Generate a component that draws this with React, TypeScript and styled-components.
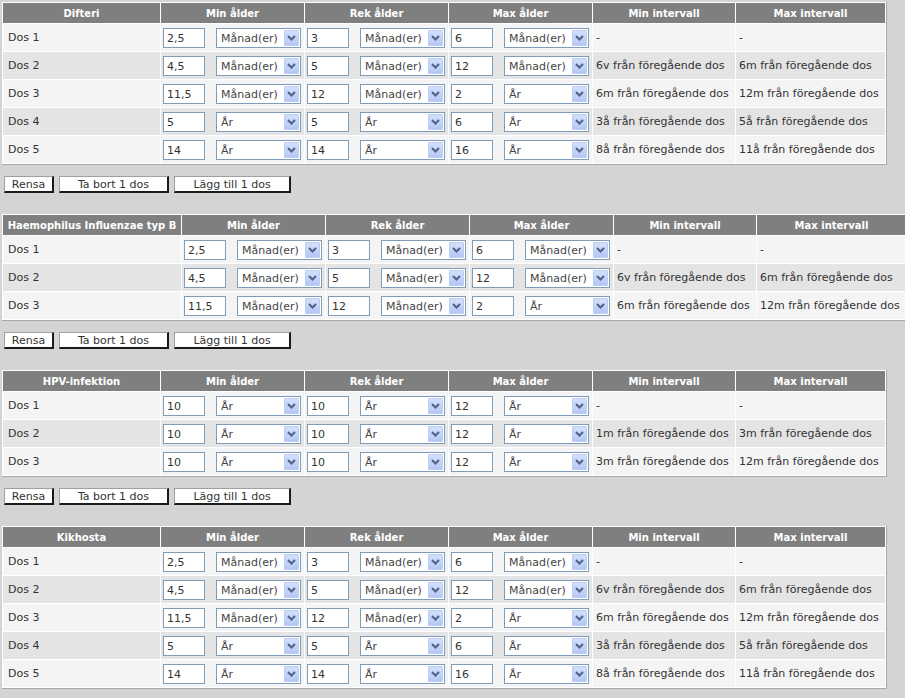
import styled, { createGlobalStyle } from 'styled-components';

type Dose = [string, string, string, string, string, string, string, string];

interface Vaccine {
	name: string;
	labelWidth: number;
	doses: Dose[];
}

const M = 'Månad(er)';
const Y = 'År';
const FROM = ' från föregående dos';

const childDoses: Dose[] = [
	['2,5', M, '3', M, '6', M, '-', '-'],
	['4,5', M, '5', M, '12', M, '6v' + FROM, '6m' + FROM],
	['11,5', M, '12', M, '2', Y, '6m' + FROM, '12m' + FROM],
	['5', Y, '5', Y, '6', Y, '3å' + FROM, '5å' + FROM],
	['14', Y, '14', Y, '16', Y, '8å' + FROM, '11å' + FROM],
];

const vaccines: Vaccine[] = [
	{ name: 'Difteri', labelWidth: 157, doses: childDoses },
	{ name: 'Haemophilus Influenzae typ B', labelWidth: 178, doses: childDoses.slice(0, 3) },
	{
		name: 'HPV-infektion',
		labelWidth: 157,
		doses: [
			['10', Y, '10', Y, '12', Y, '-', '-'],
			['10', Y, '10', Y, '12', Y, '1m' + FROM, '3m' + FROM],
			['10', Y, '10', Y, '12', Y, '3m' + FROM, '12m' + FROM],
		],
	},
	{ name: 'Kikhosta', labelWidth: 157, doses: childDoses },
];

const columns = [
	{ title: 'Min ålder', width: 143 },
	{ title: 'Rek ålder', width: 143 },
	{ title: 'Max ålder', width: 143 },
	{ title: 'Min intervall', width: 142 },
	{ title: 'Max intervall', width: 149 },
];

const GlobalStyle = createGlobalStyle`
	html, body {
		margin: 0;
		background: #d4d4d4;
		overflow: hidden;
	}
	body {
		font-family: 'DejaVu Sans', Verdana, sans-serif;
		font-size: 11px;
		color: #333;
	}
`;

function AgeSelect({ value }: { value: string }) {
	return (
		<SelectBox>
			<SelectText>{value}</SelectText>
			<ArrowButton>
				<svg width='9' height='6' viewBox='0 0 9 6'>
					<polyline points='1,1 4.5,4.5 8,1' fill='none' stroke='#4d6185' strokeWidth='2' />
				</svg>
			</ArrowButton>
		</SelectBox>
	);
}

function AgeCell({ value, unit }: { value: string; unit: string }) {
	return (
		<Cell>
			<AgeField>
				<NumberInput defaultValue={value} />
				<AgeSelect value={unit} />
			</AgeField>
		</Cell>
	);
}

function VaccineTable({ vaccine }: { vaccine: Vaccine }) {
	const tableWidth = 1 + vaccine.labelWidth + 1 + columns.reduce((s, c) => s + c.width + 1, 0) + 1;
	return (
		<Block>
			<Table style={{ width: tableWidth }}>
				<thead>
					<tr>
						<HeaderCell $width={vaccine.labelWidth}>{vaccine.name}</HeaderCell>
						{columns.map(c => (
							<HeaderCell key={c.title} $width={c.width}>
								{c.title}
							</HeaderCell>
						))}
					</tr>
				</thead>
				<tbody>
					{vaccine.doses.map((d, i) => (
						<Row key={i} $even={i % 2 === 1}>
							<TextCell>Dos {i + 1}</TextCell>
							<AgeCell value={d[0]} unit={d[1]} />
							<AgeCell value={d[2]} unit={d[3]} />
							<AgeCell value={d[4]} unit={d[5]} />
							<TextCell $small>{d[6]}</TextCell>
							<TextCell $small>{d[7]}</TextCell>
						</Row>
					))}
				</tbody>
			</Table>
			<ButtonBar>
				<ActionButton $width={50}>Rensa</ActionButton>
				<ActionButton $width={110}>Ta bort 1 dos</ActionButton>
				<ActionButton $width={117}>Lägg till 1 dos</ActionButton>
			</ButtonBar>
		</Block>
	);
}

export default function App() {
	return (
		<Page>
			<GlobalStyle />
			{vaccines.map(v => (
				<VaccineTable key={v.name} vaccine={v} />
			))}
		</Page>
	);
}

const Page = styled.div`
	padding: 2px 0 0 2px;
	width: 1000px;
`;

const Block = styled.section`
	margin-bottom: 21px;
`;

const Table = styled.table`
	table-layout: fixed;
	border-collapse: separate;
	border-spacing: 1px;
	background: #ffffff;
	border-right: 1px solid #a9a9a9;
	border-bottom: 1px solid #a9a9a9;
`;

const HeaderCell = styled.th<{ $width: number }>`
	box-sizing: border-box;
	width: ${p => p.$width}px;
	height: 20px;
	padding: 0 2px;
	background: #7f7f7f;
	color: #ffffff;
	font-weight: bold;
	font-size: 10px;
	text-align: center;
	white-space: nowrap;
	overflow: hidden;
`;

const Row = styled.tr<{ $even: boolean }>`
	background: ${p => (p.$even ? '#e4e4e4' : '#f4f4f4')};
`;

const Cell = styled.td`
	box-sizing: border-box;
	height: 27px;
	padding: 0;
	vertical-align: middle;
`;

const TextCell = styled(Cell)<{ $small?: boolean }>`
	padding-left: ${p => (p.$small ? '3px' : '5px')};
	white-space: nowrap;
	overflow: hidden;
`;

const AgeField = styled.div`
	display: flex;
	align-items: center;
	justify-content: space-between;
	padding: 1px 3px 0 2px;
`;

const NumberInput = styled.input`
	box-sizing: border-box;
	width: 42px;
	height: 20px;
	margin: 0;
	padding: 0 3px;
	border: 1px solid #7f9db9;
	background: #ffffff;
	font-family: 'DejaVu Sans', Verdana, sans-serif;
	font-size: 11px;
	color: #333;
	outline: none;
`;

const SelectBox = styled.div`
	box-sizing: border-box;
	width: 85px;
	height: 20px;
	display: flex;
	align-items: center;
	border: 1px solid #7f9db9;
	background: #ffffff;
`;

const SelectText = styled.span`
	flex: 1;
	padding-left: 4px;
	color: #444;
	white-space: nowrap;
	overflow: hidden;
`;

const ArrowButton = styled.span`
	box-sizing: border-box;
	width: 15px;
	height: 16px;
	margin-right: 1px;
	display: flex;
	align-items: center;
	justify-content: center;
	border: 1px solid #bccdf5;
	border-radius: 1px;
	background: linear-gradient(#d3e0fc, #b4c8f5);
`;

const ButtonBar = styled.div`
	display: flex;
	gap: 5px;
	margin: 11px 0 0 2px;
`;

const ActionButton = styled.button<{ $width: number }>`
	box-sizing: border-box;
	width: ${p => p.$width}px;
	height: 17px;
	padding: 0;
	background: #ffffff;
	border-style: solid;
	border-width: 1px 2px 2px 1px;
	border-color: #a0a0a0 #1a1a1a #1a1a1a #a0a0a0;
	font-family: 'DejaVu Sans', Verdana, sans-serif;
	font-size: 11px;
	color: #333;
	text-align: center;
	line-height: 13px;
	cursor: pointer;
`;
